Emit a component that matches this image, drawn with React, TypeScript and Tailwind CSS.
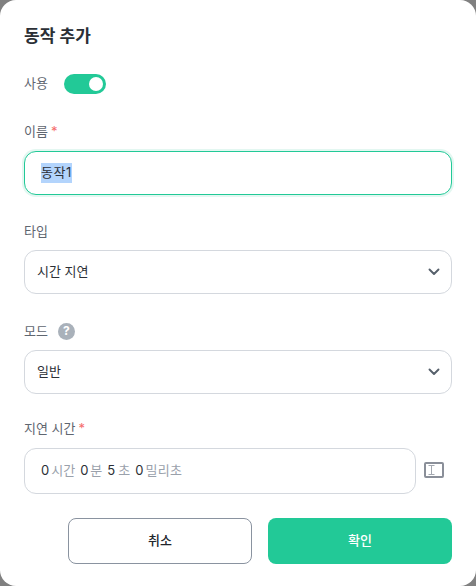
import React from "react";

function Chevron() {
  return (
    <svg width="14" height="10" viewBox="0 0 14 10" fill="none" className="shrink-0">
      <path d="M2.5 2.5 L7 7 L11.5 2.5" stroke="#56606b" strokeWidth="1.9" strokeLinecap="round" strokeLinejoin="round" />
    </svg>
  );
}

function Label({ children, required }: { children: React.ReactNode; required?: boolean }) {
  return (
    <div className="flex items-center h-5 text-[13px] leading-5 text-[#5f6670]">
      <span>{children}</span>
      {required && <span className="ml-[3px] text-[#f56c6c]">*</span>}
    </div>
  );
}

function Select({ value }: { value: string }) {
  return (
    <div className="mt-[9px] flex h-11 items-center justify-between rounded-xl border border-[#d4d8de] bg-white pl-3 pr-[10px] text-[13px] text-[#2b2f36]">
      <span>{value}</span>
      <Chevron />
    </div>
  );
}

export default function App() {
  return (
    <div className="h-[586px] w-[476px] overflow-hidden bg-[#808080] font-['Inter','Noto_Sans_CJK_KR',sans-serif]">
      <div className="flex h-full flex-col rounded-2xl bg-white px-6 pt-[24px]">
        <h1 className="h-6 text-[17px] font-semibold leading-6 text-[#2b2f36]">동작 추가</h1>

        <div className="mt-[26px] flex h-5 items-center gap-4">
          <span className="text-[13px] text-[#5f6670]">사용</span>
          <div className="flex h-5 w-[42px] items-center justify-end rounded-full bg-[#22c997] pr-[3px]">
            <div className="h-[14px] w-[14px] rounded-full bg-white" />
          </div>
        </div>

        <div className="mt-[27px]">
          <Label required>이름</Label>
        </div>
        <div className="mt-[10px] flex h-11 items-center rounded-xl border border-[#22c997] bg-white pl-4 text-[13px] text-[#2b2f36] shadow-[0_0_0_2px_#e3f7f1]">
          <span className="bg-[#b3d4fc] tracking-[0.5px]">동작1</span>
        </div>

        <div className="mt-[26px]">
          <Label>타입</Label>
        </div>
        <Select value="시간 지연" />

        <div className="mt-[27px] flex items-center gap-[10px]">
          <Label>모드</Label>
          <div className="flex h-[17px] w-[17px] items-center justify-center rounded-full bg-[#a9b1ba] text-[12px] font-bold leading-none text-white">?</div>
        </div>
        <Select value="일반" />

        <div className="mt-[24px]">
          <Label required>지연 시간</Label>
        </div>
        <div className="mt-[10px] flex items-center gap-2">
          <div className="flex h-[46px] w-[392px] items-center gap-[5px] rounded-xl border border-[#d4d8de] bg-white pl-[16px] text-[13px] text-[#2b2f36]">
            <span className="flex gap-[2px]">0<span className="text-[#9aa1ab]">시간</span></span>
            <span className="flex gap-[2px]">0<span className="text-[#9aa1ab]">분</span></span>
            <span className="flex gap-[3px]">5<span className="text-[#9aa1ab]">초</span></span>
            <span className="flex gap-[2px]">0<span className="text-[#9aa1ab] tracking-[0.4px]">밀리초</span></span>
          </div>
          <svg width="20" height="16" viewBox="0 0 20 16" fill="none" className="mb-[2px]">
            <rect x="1" y="1" width="18" height="14" rx="1" stroke="#8a8f99" strokeWidth="2" />
            <path d="M4.5 3.5h6M4.5 12.5h6M7.5 3.5v9" stroke="#a3a8b0" strokeWidth="1" />
          </svg>
        </div>

        <div className="mt-6 flex justify-end gap-4">
          <button className="flex h-[46px] w-[184px] items-center justify-center rounded-lg border border-[#8a93a0] bg-white text-[13px] font-medium text-[#22262c]">취소</button>
          <button className="flex h-[46px] w-[184px] items-center justify-center rounded-lg bg-[#22c997] text-[13px] font-medium text-white">확인</button>
        </div>
      </div>
    </div>
  );
}
